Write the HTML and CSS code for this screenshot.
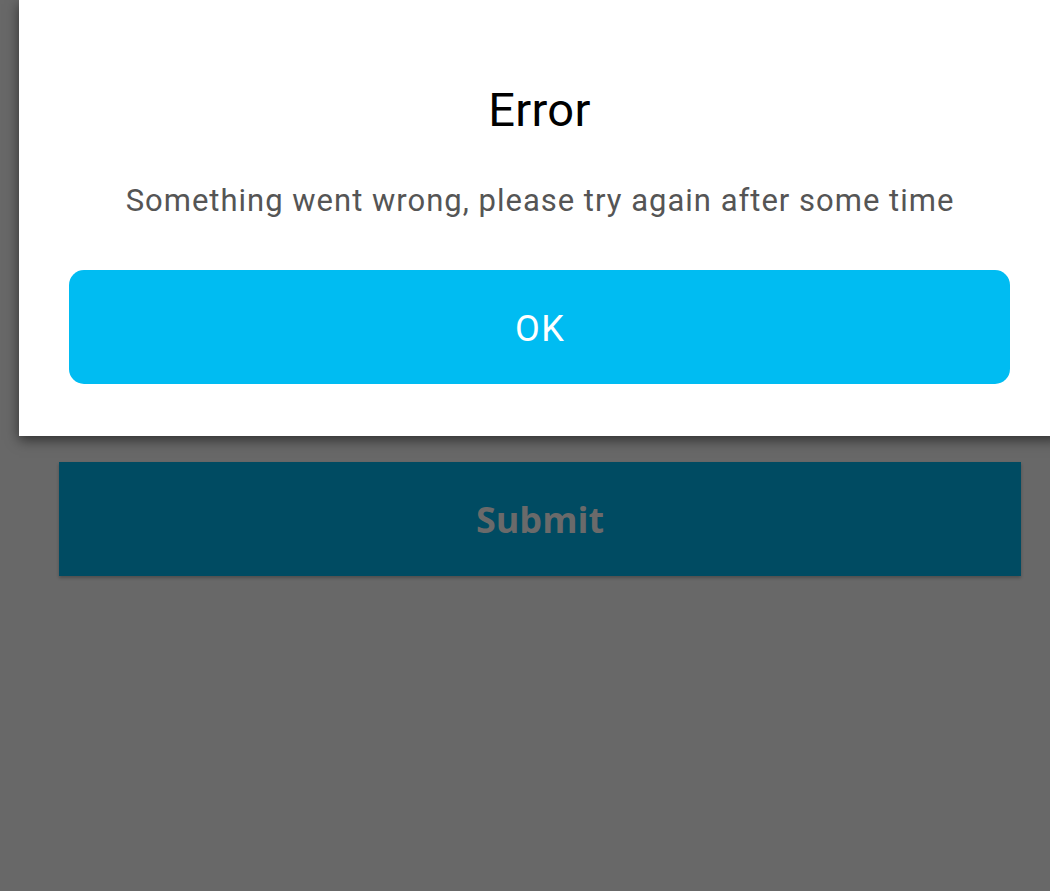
FILE: index.html
```html
<!DOCTYPE html>
<html>
<head>
<meta charset="utf-8">
<link rel="stylesheet" href="styles.css">
</head>
<body>
<div class="dialog">
  <h1 class="title">Error</h1>
  <p class="message">Something went wrong, please try again after some time</p>
  <button class="ok">OK</button>
</div>
<button class="submit">Submit</button>
</body>
</html>
```
FILE: styles.css
```css
html, body {
  margin: 0;
  padding: 0;
  height: 100%;
  overflow: hidden;
  background: #686868;
}
.dialog {
  box-sizing: border-box;
  width: 1041px;
  height: 436px;
  margin-left: 19px;
  padding: 82px 50px 0;
  background: #ffffff;
  box-shadow: 0 4px 12px rgba(0,0,0,0.55);
  display: flex;
  flex-direction: column;
  align-items: stretch;
  font-family: Roboto, "Liberation Sans", sans-serif;
}
.title {
  margin: 0;
  font-size: 47px;
  line-height: 55px;
  font-weight: 400;
  color: #000;
  text-align: center;
  letter-spacing: 0.3px;
}
.message {
  margin: 46px 0 0;
  font-size: 31px;
  line-height: 35px;
  color: #555555;
  text-align: center;
  letter-spacing: 1px;
  padding-left: 1px;
}
.ok {
  margin-top: 52px;
  height: 114px;
  border: none;
  border-radius: 15px;
  background: #00bcf2;
  color: #ffffff;
  font-family: Roboto, "Liberation Sans", sans-serif;
  font-size: 36px;
  letter-spacing: 1.5px;
  padding: 4px 0 0 1.5px;
}
.submit {
  display: block;
  margin: 26px 0 0 59px;
  width: 962px;
  height: 114px;
  border: none;
  background: #004b62;
  color: #6a6a6a;
  font-family: "Open Sans", "Noto Sans", sans-serif;
  font-weight: 700;
  font-size: 36px;
  padding: 0;
  box-shadow: 0 2px 3px rgba(0,0,0,0.25);
}
```
